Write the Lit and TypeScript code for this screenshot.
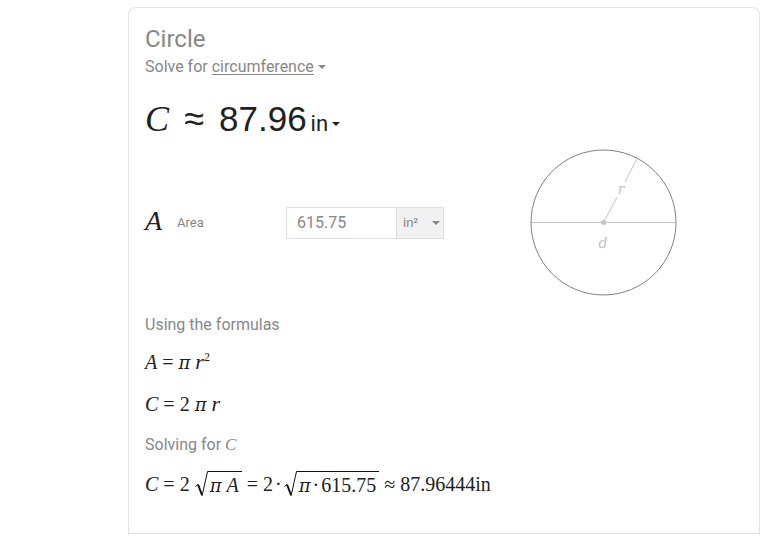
import { LitElement, html, css } from "lit";
import { customElement, property } from "lit/decorators.js";

const caret = html`<svg class="caret" viewBox="0 0 8 4" width="8" height="4" aria-hidden="true"><path d="M0 0h8L4 4z" fill="currentColor"/></svg>`;

@customElement("math-root")
class MathRoot extends LitElement {
  static styles = css`
    :host { display: inline-flex; align-items: stretch; height: 26px; }
    svg { display: block; flex: none; }
    .body { display: flex; align-items: baseline; border-top: 1px solid #111; padding: 0 3px 0 2px; line-height: 26px; box-sizing: border-box; height: 26px; }
  `;
  render() {
    return html`<svg width="13" height="26" viewBox="0 0 13 26" aria-hidden="true">
        <path d="M0.5 15.5L3 13.5" fill="none" stroke="#111" stroke-width="1"/>
        <path d="M3 13.5L7 24" fill="none" stroke="#111" stroke-width="2"/>
        <path d="M7 25L12.5 0.5H13" fill="none" stroke="#111" stroke-width="1"/>
      </svg><span class="body"><slot></slot></span>`;
  }
}

@customElement("circle-figure")
class CircleFigure extends LitElement {
  static styles = css`
    :host { display: block; }
    svg { display: block; }
    .outline { fill: none; stroke: #808080; }
    .line { stroke: #c4c4c4; }
    .dot { fill: #c4c4c4; }
    .name { font: italic 14px "DejaVu Serif", serif; fill: #c0c0c0; text-anchor: middle; }
  `;
  render() {
    return html`<svg width="147" height="147" viewBox="0 0 147 147" role="img" aria-label="Circle with radius r and diameter d">
      <line class="line" x1="1" y1="73.5" x2="146" y2="73.5"/>
      <path class="line" d="M73.5 73.5L87 48M95 33L107 9.500" fill="none"/>
      <circle class="dot" cx="73.5" cy="73.5" r="2.500"/>
      <circle class="outline" cx="73.5" cy="73.5" r="72.500"/>
      <text class="name" x="91" y="45">r</text>
      <text class="name" x="73" y="99">d</text>
    </svg>`;
  }
}

@customElement("app-root")
class AppRoot extends LitElement {
  @property() area = "615.75";

  static styles = css`
    :host { display: block; font-family: Roboto, sans-serif; color: #212121; background: #fff; }
    * { box-sizing: border-box; }
    .card { margin: 7px 0 0 128px; border: 1px solid #dfe1e5; border-bottom: 0; border-radius: 8px 8px 0 0; }
    .content { padding: 17px 16px 35px; }
    h1 { margin: 0; font-size: 24px; line-height: 28px; font-weight: 400; color: #878787; }
    select { appearance: none; border: 0; padding: 0; margin: 0; background: none; font: inherit; color: inherit; border-radius: 0; }
    .solve { display: flex; align-items: center; font-size: 16px; line-height: 28px; color: #878787; }
    .target { margin-left: 4px; height: 20px; line-height: 20px; text-decoration: underline; text-underline-offset: 2px; }
    .caret { display: block; flex: none; margin-left: 3px; }
    .math { font-family: "Liberation Serif", serif; }
    i { font-family: "Liberation Serif", serif; font-style: italic; }
    .result { display: flex; align-items: baseline; margin-top: 18px; height: 40px; line-height: 40px; font-size: 36px; }
    .approx { width: 50px; text-align: center; font-family: "Liberation Sans", sans-serif; }
    output { font-family: "Liberation Sans", sans-serif; font-size: 35px; }
    .unit { display: flex; align-items: baseline; margin-left: 4px; font-size: 22px; }
    .unit .caret { align-self: center; }
    .solver { display: grid; grid-template-columns: 141px 158px 1fr; align-items: center; margin-top: 10px; }
    .label { display: flex; align-items: center; font-size: 13px; line-height: 32px; color: #878787; }
    .label i { width: 32px; padding-bottom: 4px; font-size: 28px; line-height: 28px; color: #212121; }
    .field { display: flex; height: 32px; border: 1px solid #dfdfdf; }
    .field input { flex: 1; min-width: 0; border: 0; padding: 0 10px; font: 16px Roboto, sans-serif; color: #878787; background: #fff; }
    .pick { position: relative; display: flex; align-items: center; width: 47px; border-left: 1px solid #dfdfdf; background: #f1f1f1; color: #878787; }
    .pick select { width: 100%; height: 100%; padding-left: 6px; font-size: 13px; }
    .pick .caret { position: absolute; right: 3px; pointer-events: none; }
    circle-figure { justify-self: center; margin-left: 20px; }
    h2 { margin: 0; font-size: 16px; line-height: 20px; font-weight: 400; color: #878787; }
    h2 i { font-size: 17px; line-height: 16px; }
    .using { margin-top: 19px; }
    .solving { margin-top: 17px; }
    .formula { display: flex; align-items: baseline; height: 28px; margin: 13px 0 0; font-size: 20px; line-height: 28px; }
    .formula.next { margin-top: 14px; }
    .formula.last { margin-top: 15px; align-items: center; }
    .v { font-size: 22px; line-height: 20px; }
    .pi { font-family: "DejaVu Serif", serif; font-size: 18px; line-height: 20px; }
    .gap { margin-left: 5px; }
    .s { font-size: 12px; position: relative; top: -8px; }
    .e { padding: 0 5px; }
    .dot { padding: 0 2px; }
    footer { border-top: 1px solid #dfe1e5; height: 2px; }
  `;

  render() {
    return html`<main class="card">
      <section class="content">
        <h1>Circle</h1>
        <div class="solve">
          <label for="target">Solve for</label>
          <select id="target" class="target"><option>circumference</option></select>${caret}
        </div>
        <div class="result">
          <i>C</i><span class="approx">≈</span><output>87.96</output>
          <span class="unit"><select aria-label="Result unit"><option>in</option></select>${caret}</span>
        </div>
        <div class="solver">
          <label class="label" for="area"><i>A</i>Area</label>
          <div class="field">
            <input id="area" .value=${this.area} inputmode="decimal">
            <div class="pick"><select aria-label="Area unit"><option>in²</option></select>${caret}</div>
          </div>
          <circle-figure></circle-figure>
        </div>
        <h2 class="using">Using the formulas</h2>
        <p class="formula math"><i>A</i><span class="e">=</span><i class="pi">π</i><i class="v gap">r</i><span class="s">2</span></p>
        <p class="formula math next"><i>C</i><span class="e">=</span><span>2</span><i class="pi gap">π</i><i class="v gap">r</i></p>
        <h2 class="solving">Solving for <i>C</i></h2>
        <p class="formula math last"><i>C</i><span class="e">=</span><span>2</span><math-root class="gap"><i class="pi">π</i><i class="gap">A</i></math-root><span class="e">=</span><span>2</span><span class="dot">·</span><math-root><i class="pi">π</i><span class="dot">·</span><span>615.75</span></math-root><span class="e">≈</span><span>87.96444in</span></p>
      </section>
      <footer></footer>
    </main>`;
  }
}
